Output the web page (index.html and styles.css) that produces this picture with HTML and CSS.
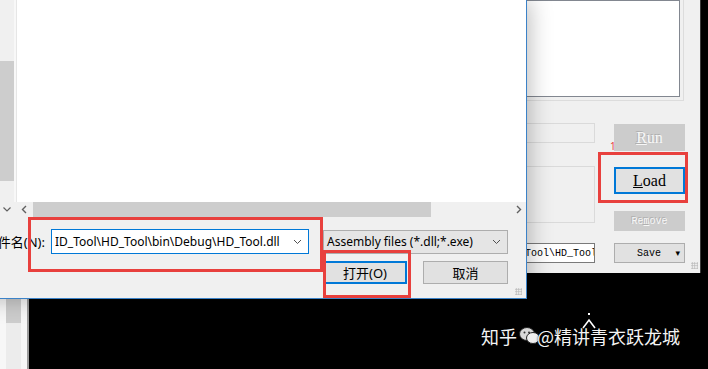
FILE: index.html
```html
<!DOCTYPE html>
<html lang="zh-CN">
<head>
  <meta charset="UTF-8" />
  <meta name="viewport" content="width=device-width, initial-scale=1.0"/>
  <title>打开 - HD_Tool</title>
  <link rel="stylesheet" href="styles.css">
</head>
<body>
  <div class="desk">

    <!-- ventana de atras, a la izquierda -->
    <div class="side-win">
      <div class="side-scroll"><div class="side-thumb"></div></div>
    </div>

    <!-- la herramienta -->
    <div class="app">
      <div class="log-frame"><div class="log"></div></div>
      <div class="app-grid">
        <div class="fields">
          <div class="field f1"></div>
          <div class="field f2"></div>
          <div class="field f3"><span>D:\HD_Tool\HD_Tool</span></div>
        </div>
        <div class="btns">
          <div class="wbtn big off"><span><u>R</u>un</span></div>
          <div class="wbtn big load"><span><u>L</u>oad</span></div>
          <div class="wbtn off small"><span>Re<u>m</u>ove</span></div>
          <div class="wbtn small save"><span>Save</span><span class="caret">&#9662;</span></div>
        </div>
      </div>
      <div class="grip app-grip"></div>
    </div>

    <!-- dialogo abrir archivo -->
    <div class="dlg">
      <div class="dlg-main">
        <div class="nav"><div class="vscroll"><div class="vthumb"></div></div></div>
        <div class="split"></div>
        <div class="files"></div>
      </div>
      <div class="hbar">
        <div class="nav-down">
          <svg width="14" height="15" viewBox="0 0 14 15"><polyline points="3.5,5.5 7,9 10.5,5.5" fill="none" stroke="#606060" stroke-width="1.2"/></svg>
        </div>
        <div class="hscroll">
          <div class="harrow">
            <svg width="16" height="15" viewBox="0 0 16 15"><polyline points="9,4 5.5,7.5 9,11" fill="none" stroke="#606060" stroke-width="1.4"/></svg>
          </div>
          <div class="hthumb"></div>
          <div class="htrack"></div>
          <div class="harrow">
            <svg width="16" height="15" viewBox="0 0 16 15"><polyline points="7,4 10.5,7.5 7,11" fill="none" stroke="#606060" stroke-width="1.4"/></svg>
          </div>
        </div>
      </div>
      <div class="dlg-foot">
        <div class="row">
          <span class="lbl">文件名(N):</span>
          <div class="fname">
            <span>ID_Tool\HD_Tool\bin\Debug\HD_Tool.dll</span>
            <svg width="9" height="6" viewBox="0 0 9 6"><polyline points="1,1 4.5,4.5 8,1" fill="none" stroke="#505050" stroke-width="1"/></svg>
          </div>
          <div class="ftype">
            <span>Assembly files (*.dll;*.exe)</span>
            <svg width="9" height="6" viewBox="0 0 9 6"><polyline points="1,1 4.5,4.5 8,1" fill="none" stroke="#505050" stroke-width="1"/></svg>
          </div>
        </div>
        <div class="row row-btns">
          <div class="dbtn primary">打开(O)</div>
          <div class="dbtn">取消</div>
        </div>
      </div>
      <div class="grip dlg-grip"></div>
    </div>

    <!-- marcas rojas de la captura -->
    <div class="mark mark-name"></div>
    <div class="mark mark-open"></div>
    <div class="mark mark-load"></div>
    <div class="step">1</div>

    <svg class="cursor" width="14" height="20" viewBox="0 0 14 20">
      <rect x="6" y="0" width="2" height="2" fill="#fff"/>
      <polyline points="1,15 7,7 13,15" fill="none" stroke="#fff" stroke-width="1.6"/>
    </svg>

    <div class="wm">
      <span>知乎</span>
      <svg class="wm-icon" width="22" height="20" viewBox="0 0 22 20">
        <ellipse cx="8" cy="8" rx="7.5" ry="6.5" fill="#d8d8d8" stroke="#222" stroke-width="1"/>
        <ellipse cx="14" cy="12" rx="6.5" ry="5.5" fill="#eee" stroke="#222" stroke-width="1"/>
        <circle cx="5.5" cy="6.5" r="1" fill="#333"/><circle cx="10" cy="6.5" r="1" fill="#333"/>
      </svg>
      <span>@精讲青衣跃龙城</span>
    </div>
  </div>
</body>
</html>
```

FILE: styles.css
```css
body {
  margin: 0;
  background-color: #000;
  font-family: "Noto Sans", "Noto Sans CJK SC", sans-serif;
}
.desk {
  position: relative;
  width: 708px;
  height: 369px;
  overflow: hidden;
  background-color: #000;
}

/* ventana de atras */
.side-win {
  position: absolute;
  left: 0;
  top: 0;
  width: 27px;
  height: 369px;
  background-color: #f7f7f7;
  border-right: 2px solid #9c9c9c;
}
.side-scroll {
  margin-left: 6px;
  width: 15px;
  height: 100%;
  background-color: #ececec;
}
.side-thumb {
  margin-top: 299px;
  height: 24px;
  background-color: #cdcdcd;
}

/* herramienta */
.app {
  position: absolute;
  left: 380px;
  top: 0;
  width: 320px;
  height: 273px;
  background-color: #f0f0f0;
  border-right: 1px solid #3a3a3a;
}
.log-frame {
  box-sizing: border-box;
  height: 101px;
  margin-right: 16px;
  padding: 0 3px 3px 0;
  border-right: 1px solid #dcdcdc;
  border-bottom: 1px solid #dcdcdc;
}
.log {
  box-sizing: border-box;
  height: 97px;
  background-color: #fff;
  border: 1px solid #828790;
}
.app-grid {
  display: flex;
  gap: 19px;
}
.fields {
  width: 215px;
  display: flex;
  flex-direction: column;
}
.field {
  box-sizing: border-box;
  border: 1px solid #dadada;
  background-color: #f0f0f0;
}
.f1 { margin-top: 22px; height: 20px; }
.f2 { margin-top: 23px; height: 57px; }
.f3 {
  margin-top: 20px;
  height: 20px;
  background-color: #fff;
  border-color: #7a7a7a;
  display: flex;
  justify-content: flex-end;
  align-items: center;
  overflow: hidden;
  white-space: nowrap;
  font-family: "Liberation Mono", "DejaVu Sans Mono", monospace;
  font-size: 10px;
  color: #000;
}
.f3 span { margin-right: -3px; }
.btns {
  width: 71px;
  display: flex;
  flex-direction: column;
}
.wbtn {
  box-sizing: border-box;
  display: flex;
  align-items: center;
  justify-content: center;
  background-color: #e1e1e1;
  border: 1px solid #adadad;
  color: #000;
}
.wbtn.big {
  height: 27px;
  font-family: "Liberation Serif", serif;
  font-size: 16px;
}
.wbtn.small {
  height: 20px;
  font-family: "Liberation Mono", "DejaVu Sans Mono", monospace;
  font-size: 10px;
}
.wbtn.off {
  background-color: #cccccc;
  border-color: #cccccc;
  color: #f7f7f7;
  text-shadow: -1px -1px 0 #b0b0b0;
}
.btns .wbtn:nth-child(1) { margin-top: 23px; }
.btns .wbtn:nth-child(2) { margin-top: 16px; }
.btns .wbtn:nth-child(3) { margin-top: 17px; }
.btns .wbtn:nth-child(4) { margin-top: 12px; }
.load {
  border: 2px solid #0078d7;
}
.save {
  justify-content: flex-start;
  padding: 0 4px 0 22px;
}
.save .caret {
  margin-left: auto;
  font-family: "DejaVu Sans", sans-serif;
  font-size: 9px;
}
.grip {
  position: absolute;
  width: 7px;
  height: 7px;
  background-image: radial-gradient(circle, #b8b8b8 0.8px, transparent 1px);
  background-size: 2.5px 2.5px;
}
.app-grip { right: 2px; bottom: 4px; }

/* dialogo */
.dlg {
  position: absolute;
  left: -40px;
  top: 0;
  box-sizing: border-box;
  width: 567px;
  height: 299px;
  background-color: #f0f0f0;
  border-right: 1px solid #3b82c8;
  border-bottom: 1px solid #3b82c8;
  box-shadow: 2px 0 22px rgba(0, 0, 0, 0.28);
  font-size: 12px;
  color: #000;
}
.dlg-main {
  display: flex;
  height: 202px;
}
.nav {
  width: 54px;
  display: flex;
  justify-content: flex-end;
  background-color: #fff;
}
.vscroll {
  width: 14px;
  background-color: #f0f0f0;
}
.vthumb {
  margin-top: 61px;
  height: 120px;
  background-color: #cdcdcd;
}
.split {
  width: 2px;
  background-color: #f8f8f8;
  border-right: 1px solid #e6e6e6;
}
.files {
  flex: 1;
  background-color: #fff;
}
.hbar {
  display: flex;
  height: 15px;
}
.nav-down {
  width: 54px;
  display: flex;
  justify-content: flex-end;
  background-color: #f0f0f0;
}
.hscroll {
  flex: 1;
  display: flex;
  margin-left: 3px;
  background-color: #f0f0f0;
}
.harrow {
  width: 16px;
  height: 15px;
}
.hthumb {
  width: 398px;
  background-color: #cdcdcd;
}
.htrack {
  flex: 1;
}
.dlg-foot {
  height: 81px;
  box-sizing: border-box;
  padding: 12px 18px 0 0;
}
.row {
  display: flex;
  justify-content: flex-end;
  align-items: center;
  height: 25px;
}
.lbl {
  margin-right: 6px;
  white-space: nowrap;
  font-size: 13px;
}
.fname {
  box-sizing: border-box;
  width: 258px;
  height: 25px;
  border: 1px solid #0078d7;
  background-color: #fff;
  display: flex;
  align-items: center;
  padding: 0 6px 0 3px;
  white-space: nowrap;
  overflow: hidden;
}
.fname span {
  flex: 1;
  overflow: hidden;
}
.ftype {
  box-sizing: border-box;
  width: 185px;
  height: 24px;
  margin-left: 14px;
  border: 1px solid #adadad;
  background-color: #e5e5e5;
  display: flex;
  align-items: center;
  padding: 0 6px 0 3px;
  white-space: nowrap;
}
.ftype span { flex: 1; }
.row-btns {
  margin-top: 7px;
  height: 23px;
  gap: 16px;
}
.dbtn {
  box-sizing: border-box;
  width: 85px;
  height: 23px;
  display: flex;
  align-items: center;
  justify-content: center;
  background-color: #e1e1e1;
  border: 1px solid #adadad;
  font-size: 13px;
}
.dbtn.primary {
  width: 84px;
  border: 2px solid #0078d7;
}
.dlg-grip { right: 4px; bottom: 3px; }

/* marcas */
.mark {
  position: absolute;
  box-sizing: border-box;
  border: 3px solid #e8403d;
}
.mark-name { left: 28px; top: 217px; width: 295px; height: 55px; }
.mark-open { left: 323px; top: 250px; width: 88px; height: 48px; }
.mark-load { left: 598px; top: 152px; width: 90px; height: 51px; }
.step {
  position: absolute;
  left: 610px;
  top: 140px;
  font-size: 10px;
  line-height: 12px;
  color: #e8403d;
}
.cursor {
  position: absolute;
  left: 582px;
  top: 313px;
}

.wm {
  position: absolute;
  left: 481px;
  top: 324px;
  display: flex;
  align-items: center;
  font-family: "Noto Sans CJK SC", sans-serif;
  font-size: 18px;
  line-height: 24px;
  color: #f4f4f4;
  text-shadow: 0 0 2px #000, 1px 1px 1px #000;
}
.wm-icon { margin: 0 -4px 0 2px; }
```
